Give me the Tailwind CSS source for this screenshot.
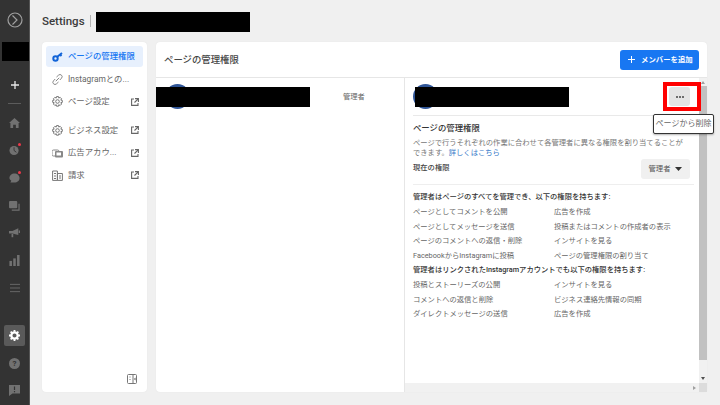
<!DOCTYPE html>
<html lang="ja">
<head>
  <meta charset="utf-8" />
  <title>Settings</title>
  <script src="https://cdn.jsdelivr.net/npm/@tailwindcss/browser@4"></script>
</head>
<body class="w-[720px] h-[405px] overflow-hidden bg-[#f0f0f0] font-['Roboto','Noto_Sans_CJK_JP',sans-serif] text-[#444]">
<div class="flex h-[405px]">
  <!-- dark nav rail -->
  <nav class="relative w-[30px] shrink-0 h-full bg-[#333333] border-r border-[#555] flex flex-col items-center">
    <svg class="mt-[12px] shrink-0" width="16" height="16" viewBox="0 0 16 16" fill="none" stroke="#a0a0a0" stroke-width="1.2"><circle cx="8" cy="8" r="7"/><path d="M5.500 3.500 10 8l-4.500 4.500"/></svg>
    <div class="self-start ml-[2px] mt-[14px] w-[27px] h-[19px] bg-black shrink-0"></div>
    <svg class="mt-[20px] shrink-0" width="8" height="8" viewBox="0 0 8 8" stroke="#e8e8e8" stroke-width="1.300"><path d="M4 0v8M0 4h8"/></svg>
    <div class="mt-[14px] w-[13px] h-px bg-[#5c5c5c] shrink-0"></div>
    <svg class="mt-[14px] shrink-0" width="11" height="10" viewBox="0 0 12 11" fill="#717171"><path d="M6 0 12 5.500h-1.500V11H7.500V7.500h-3V11H1.500V5.500H0z"/></svg>
    <div class="relative mt-[16px] shrink-0 w-[11px] h-[12px]">
      <svg width="11" height="12" viewBox="0 0 12 12" fill="#717171"><circle cx="5.500" cy="6.500" r="5"/><path d="M5.500 3v3.500l2.500 2" stroke="#333" fill="none"/></svg>
      <span class="absolute -top-[1px] -right-[1px] w-[3px] h-[3px] rounded-full bg-[#f0384a]"></span>
    </div>
    <div class="relative mt-[16px] shrink-0 w-[11px] h-[12px]">
      <svg width="11" height="12" viewBox="0 0 12 12" fill="#717171"><path d="M6 1c3 0 5.500 2 5.500 5s-2.500 5-5.500 5H1.500L2.500 9C1.200 8 .5 7.300.5 6 .5 3 3 1 6 1z"/></svg>
      <span class="absolute -top-[1px] -right-[1px] w-[3px] h-[3px] rounded-full bg-[#f0384a]"></span>
    </div>
    <svg class="mt-[17px] shrink-0" width="11" height="10" viewBox="0 0 12 11" fill="#717171"><rect x="0" y="0" width="9" height="8" rx="1"/><path d="M11 3v7H3" fill="none" stroke="#717171" stroke-width="1.300"/></svg>
    <svg class="mt-[17px] shrink-0" width="11" height="10" viewBox="0 0 13 11" fill="#717171"><path d="M0 3h4l7-3v8L4 6H0z"/><rect x="11.500" y="2.500" width="1.500" height="3"/><rect x="3" y="6.500" width="2" height="4"/></svg>
    <svg class="mt-[17px] shrink-0" width="11" height="11" viewBox="0 0 12 13" fill="#717171"><rect x="0" y="7" width="3" height="6"/><rect x="4.500" y="4" width="3" height="9"/><rect x="9" y="0" width="3" height="13"/></svg>
    <svg class="mt-[17px] shrink-0" width="10" height="10" viewBox="0 0 11 10" stroke="#6c6c6c" stroke-width="1"><path d="M0 1h11M0 5h11M0 9h11"/></svg>
    <div class="mt-[32px] w-[21px] h-[21px] shrink-0 rounded-[2px] bg-[#5a5a5a] flex items-center justify-center">
      <svg width="11" height="11" viewBox="0 0 12 12"><circle cx="6" cy="6" r="3.500" fill="none" stroke="#fff" stroke-width="2.500"/><path d="M6 0v2M6 10v2M0 6h2M10 6h2M1.800 1.800l1.400 1.400M8.800 8.800l1.400 1.400M1.800 10.200l1.400-1.400M8.800 3.200l1.400-1.400" stroke="#fff" stroke-width="2"/></svg>
    </div>
    <div class="mt-[12px] w-[11px] h-[11px] shrink-0 rounded-full bg-[#717171] flex items-center justify-center text-[8px] leading-none font-bold text-[#333]">?</div>
    <svg class="mt-[16px] shrink-0" width="11" height="11" viewBox="0 0 11 11" fill="#717171"><path d="M0 0h11v8.500H3.500L0 11z"/><path d="M5.500 1.500v3.500M5.500 6v1.200" stroke="#333" stroke-width="1.200"/></svg>
  </nav>

  <div class="flex-1 min-w-0 pl-[12px] pr-[13px] flex flex-col">
    <!-- page title -->
    <header class="h-[42px] shrink-0 flex items-start">
      <span class="mt-[13px] text-[11.500px] leading-[16px] font-medium text-[#3c3c3c]">Settings</span>
      <span class="ml-[5px] mt-[15px] w-px h-[12px] bg-[#b5b5b5]"></span>
      <div class="ml-[5px] mt-[12px] w-[154px] h-[20px] bg-black"></div>
    </header>

    <div class="flex gap-[9px] h-[350px]">
      <!-- settings menu -->
      <aside class="relative w-[105px] shrink-0 rounded-[4px] bg-white shadow-[0_0_1px_#ddd] px-[4px] pt-[4px] text-[8.400px] text-[#666]">
        <div class="h-[21px] mb-[1px] rounded-[3px] bg-[#e7f0fd] flex items-center pl-[6px] font-medium text-[#1877f2]">
          <svg class="shrink-0" width="11" height="10" viewBox="0 0 11 10" fill="none" stroke="#1264d8" stroke-width="2"><circle cx="3.500" cy="6.500" r="2.200"/><path d="M5 5 10 1M8 2.500l1.500 1.500"/></svg>
          <span class="ml-[5px] whitespace-nowrap">ページの管理権限</span>
        </div>
        <div class="h-[22.500px] flex items-center pl-[6px]">
          <svg class="shrink-0" width="11" height="11" viewBox="0 0 11 11" fill="none" stroke="#888" stroke-width="1"><path d="M4.500 3 6.500 1.200a2 2 0 0 1 3 3L7.800 6M6.500 8 4.500 9.800a2 2 0 0 1-3-3L3.200 5M3.800 7.200l3.400-3.400"/></svg>
          <span class="ml-[5px] whitespace-nowrap">Instagramとの...</span>
        </div>
        <div class="h-[22.500px] flex items-center pl-[6px]">
          <svg class="shrink-0" width="11" height="11" viewBox="0 0 11 11" fill="none" stroke="#777" stroke-width="1"><circle cx="5.500" cy="5.500" r="1.800"/><path d="M4.500.6h2l.3 1.500 1.300-.8 1.500 1.500-.8 1.300 1.500.3v2l-1.500.3.800 1.300-1.500 1.500-1.300-.8-.3 1.500h-2l-.3-1.500-1.300.8-1.500-1.500.8-1.300L.7 6.400v-2l1.500-.3-.8-1.300 1.500-1.500 1.300.8z"/></svg>
          <span class="ml-[5px] whitespace-nowrap">ページ設定</span>
          <svg class="ml-auto mr-[4px] shrink-0" width="8" height="8" viewBox="0 0 8 8" fill="none" stroke="#666" stroke-width="1.100"><path d="M3 1H.6v6.400H7V5M4 .6h3.400V4M7.200.8 3.500 4.500"/></svg>
        </div>
        <div class="h-[6px]"></div>
        <div class="h-[22.500px] flex items-center pl-[6px]">
          <svg class="shrink-0" width="11" height="11" viewBox="0 0 11 11" fill="none" stroke="#777" stroke-width="1"><circle cx="5.500" cy="5.500" r="1.800"/><path d="M4.500.6h2l.3 1.500 1.300-.8 1.500 1.500-.8 1.300 1.500.3v2l-1.500.3.800 1.300-1.500 1.500-1.300-.8-.3 1.500h-2l-.3-1.500-1.300.8-1.500-1.500.8-1.300L.7 6.400v-2l1.500-.3-.8-1.300 1.500-1.500 1.300.8z"/></svg>
          <span class="ml-[5px] whitespace-nowrap">ビジネス設定</span>
          <svg class="ml-auto mr-[4px] shrink-0" width="8" height="8" viewBox="0 0 8 8" fill="none" stroke="#666" stroke-width="1.100"><path d="M3 1H.6v6.400H7V5M4 .6h3.400V4M7.200.8 3.500 4.500"/></svg>
        </div>
        <div class="h-[22.500px] flex items-center pl-[6px]">
          <svg class="shrink-0" width="11" height="10" viewBox="0 0 11 10" fill="#888"><rect x="0" y="2" width="7" height="6" rx="1.500" fill="none" stroke="#888"/><rect x="3" y="3" width="8" height="6.500" rx="1"/><rect x="4.500" y="4.500" width="4.500" height="3" fill="#fff"/></svg>
          <span class="ml-[5px] whitespace-nowrap">広告アカウ...</span>
          <svg class="ml-auto mr-[4px] shrink-0" width="8" height="8" viewBox="0 0 8 8" fill="none" stroke="#666" stroke-width="1.100"><path d="M3 1H.6v6.400H7V5M4 .6h3.400V4M7.200.8 3.500 4.500"/></svg>
        </div>
        <div class="h-[22.500px] flex items-center pl-[6px]">
          <svg class="shrink-0" width="11" height="11" viewBox="0 0 11 11" fill="none" stroke="#777" stroke-width="1"><path d="M.6 1h4.800v9.400H.6zM5.400 3.500h5v6.900h-5zM2 3.500h2M2 6h2M2 8.500h2M7 6h2M7 8h2"/></svg>
          <span class="ml-[5px] whitespace-nowrap">請求</span>
          <svg class="ml-auto mr-[4px] shrink-0" width="8" height="8" viewBox="0 0 8 8" fill="none" stroke="#666" stroke-width="1.100"><path d="M3 1H.6v6.400H7V5M4 .6h3.400V4M7.200.8 3.500 4.500"/></svg>
        </div>
        <svg class="absolute right-[10px] bottom-[8px]" width="10" height="10" viewBox="0 0 10 10" fill="none" stroke="#777" stroke-width="1"><rect x=".5" y=".5" width="9" height="9" rx="1"/><path d="M6 .5v9M3 2.500v1M3 5v1"/><path d="M8.500 3.500v3L7 5z" fill="#555" stroke="none"/></svg>
      </aside>

      <!-- permissions card -->
      <section class="relative w-[551px] shrink-0 rounded-[4px] bg-white shadow-[0_0_1px_#ddd] flex flex-col">
        <div class="h-[36px] shrink-0 border-b border-[#e6e6e6] flex items-center pl-[8px] pr-[8px]">
          <h1 class="mt-[1px] text-[9.400px] font-medium text-[#444]">ページの管理権限</h1>
          <button class="ml-auto w-[79px] h-[20px] rounded-[3px] bg-[#1877f2] text-white text-[7.400px] font-bold flex items-center pl-[8px] gap-[6px]">
            <svg width="7" height="7" viewBox="0 0 7 7" stroke="#fff" stroke-width="1"><path d="M3.500 0v7M0 3.500h7"/></svg>
            メンバーを追加
          </button>
        </div>
        <div class="flex flex-1 min-h-0">
          <!-- member list -->
          <div class="relative w-[249px] shrink-0 border-r border-[#e6e6e6]">
            <div class="absolute left-[9px] top-[6px] w-[25px] h-[25px] rounded-full bg-[#2f5597]"></div>
            <div class="absolute left-0 top-[9px] w-[154px] h-[20px] bg-black"></div>
            <span class="absolute left-[187px] top-[13px] text-[7.300px] leading-[12px] text-[#666]">管理者</span>
          </div>
          <!-- member detail -->
          <div class="relative flex-1 min-w-0 flex flex-col">
            <div class="flex flex-1 min-h-0">
              <div class="relative w-[294px] shrink-0">
                <div class="relative h-[38px] border-b border-[#e9e9e9] ml-[8px] mr-[5px]">
                  <div class="absolute left-0 top-[6px] w-[25px] h-[25px] rounded-full bg-[#2f5597]"></div>
                  <div class="absolute left-[2px] top-[9px] w-[154px] h-[20px] bg-black"></div>
                  <button class="absolute right-[4px] top-[9px] w-[21px] h-[19px] rounded-[3px] bg-[#e4e4e4] flex items-center justify-center gap-[1px]">
                    <span class="w-[2px] h-[2px] rounded-full bg-[#444]"></span><span class="w-[2px] h-[2px] rounded-full bg-[#444]"></span><span class="w-[2px] h-[2px] rounded-full bg-[#444]"></span>
                  </button>
                </div>
                <div class="pl-[8px] pr-[5px] pt-[6px]">
                  <h2 class="text-[8.400px] leading-[12px] font-medium text-[#333]">ページの管理権限</h2>
                  <p class="mt-[4px] w-[275px] text-[7.300px] leading-[10px] text-[#777]">ページで行うそれぞれの作業に合わせて各管理者に異なる権限を割り当てることができます。<span class="text-[#3578c8]">詳しくはこちら</span></p>
                  <div class="mt-[1px] h-[20px] flex items-start justify-between">
                    <span class="mt-[3px] text-[7.300px] leading-[11px] font-medium text-[#444]">現在の権限</span>
                    <span class="mr-[4px] w-[49px] h-[20px] rounded-[3px] bg-[#f0f0f0] flex items-center justify-center gap-[5px] text-[7.300px] text-[#555]">管理者<svg width="7" height="4" viewBox="0 0 7 4" fill="#333"><path d="M0 0h7L3.500 4z"/></svg></span>
                  </div>
                  <div class="mt-[5px] h-px bg-[#eeeeee]"></div>
                  <p class="mt-[5px] text-[7.300px] leading-[14px] font-medium text-[#333] whitespace-nowrap">管理者はページのすべてを管理でき、以下の権限を持ちます:</p>
                  <ul class="mt-[1px] grid grid-cols-[141px_1fr] auto-rows-[14.500px] text-[7.300px] leading-[14.500px] text-[#666] whitespace-nowrap">
                    <li>ページとしてコメントを公開</li><li>広告を作成</li>
                    <li>ページとしてメッセージを送信</li><li>投稿またはコメントの作成者の表示</li>
                    <li>ページのコメントへの返信・削除</li><li>インサイトを見る</li>
                    <li>FacebookからInstagramに投稿</li><li>ページの管理権限の割り当て</li>
                  </ul>
                  <p class="text-[7.300px] leading-[14px] font-medium text-[#333] whitespace-nowrap">管理者はリンクされたInstagramアカウントでも以下の権限を持ちます:</p>
                  <ul class="mt-[1px] grid grid-cols-[141px_1fr] auto-rows-[14.500px] text-[7.300px] leading-[14.500px] text-[#666] whitespace-nowrap">
                    <li>投稿とストーリーズの公開</li><li>インサイトを見る</li>
                    <li>コメントへの返信と削除</li><li>ビジネス連絡先情報の同期</li>
                    <li>ダイレクトメッセージの送信</li><li>広告を作成</li>
                  </ul>
                </div>
              </div>
              <!-- vertical scrollbar -->
              <div class="w-[8px] shrink-0 bg-[#f1f1f1] flex flex-col items-center">
                <svg class="mt-[3px] shrink-0" width="4" height="3" viewBox="0 0 4 3" fill="#a0a0a0"><path d="M0 3 2 0l2 3z"/></svg>
                <div class="mt-[2px] w-full h-[274px] bg-[#c1c1c1] shrink-0"></div>
                <svg class="mt-auto mb-[3px] shrink-0" width="4" height="3" viewBox="0 0 4 3" fill="#505050"><path d="M0 0h4L2 3z"/></svg>
              </div>
            </div>
            <!-- horizontal scrollbar -->
            <div class="h-[9px] shrink-0 flex">
              <div class="w-[294px] bg-[#f1f1f1] flex items-center justify-end pr-[3px]">
                <svg width="3" height="4" viewBox="0 0 3 4" fill="#a0a0a0"><path d="M0 0l3 2-3 2z"/></svg>
              </div>
              <div class="w-[8px] bg-[#dcdcdc]"></div>
            </div>
            <!-- tooltip over the button -->
            <div class="absolute left-[248px] top-[36px] w-[61px] h-[20px] rounded-[2px] border border-[#333] bg-white shadow-[0_1px_2px_rgba(0,0,0,0.3)] text-[8px] leading-[18px] text-center text-[#666] whitespace-nowrap">ページから削除</div>
          </div>
        </div>
      </section>
    </div>
  </div>
</div>
<!-- red highlight annotation -->
<div class="absolute left-[663px] top-[82px] w-[38px] h-[29px] border-[4px] border-[#ff0000]"></div>
</body>
</html>
